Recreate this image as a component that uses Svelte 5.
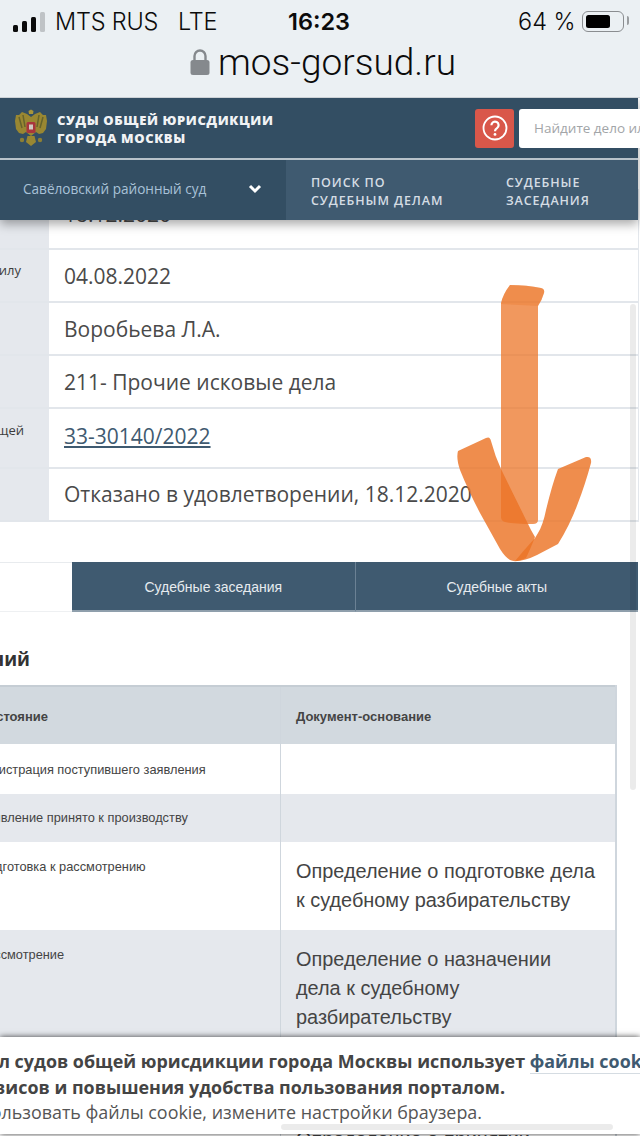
<script lang="ts">
  const details = [
    { label: '', value: '18.12.2020', cls: 'first' },
    { label: 'Дата вступления в законную силу', value: '04.08.2022', cls: '' },
    { label: '', value: 'Воробьева Л.А.', cls: '' },
    { label: '', value: '211- Прочие исковые дела', cls: '' },
    { label: 'Номер дела в вышестоящей', value: '33-30140/2022', cls: 'tall', link: true },
    { label: '', value: 'Отказано в удовлетворении, 18.12.2020', cls: 'last' }
  ];

  const history = [
    { state: 'Регистрация поступившего заявления', doc: [], cls: 'one' },
    { state: 'Заявление принято к производству', doc: [], cls: 'two alt' },
    { state: 'Подготовка к рассмотрению', doc: ['Определение о подготовке дела', 'к судебному разбирательству'], cls: 'three' },
    { state: 'Рассмотрение', doc: ['Определение о назначении', 'дела к судебному', 'разбирательству'], cls: 'four alt' },
    { state: '', doc: ['Определение о принятии'], cls: '' }
  ];
</script>

<div class="screen">
  <div class="browser">
    <div class="status">
      <div class="signal">
        <i class="b1"></i><i class="b2"></i><i class="b3"></i><i class="b4"></i>
      </div>
      <span class="carrier">MTS RUS</span>
      <span class="net">LTE</span>
      <span class="time">16:23</span>
      <span class="percent">64 %</span>
      <div class="battery"><i></i></div>
    </div>
    <div class="address">
      <svg class="lock" width="20" height="28" viewBox="0 0 20 28">
        <path d="M4.5 13V8a5.5 5.5 0 0 1 11 0v5" fill="none" stroke="#85898d" stroke-width="2.4" />
        <rect x="0.5" y="12" width="19" height="15" rx="2.5" fill="#85898d" />
      </svg>
      <span>mos-gorsud.ru</span>
    </div>
  </div>

  <header class="site-header">
    <div class="brand-row">
      <svg class="emblem" width="34" height="38" viewBox="0 0 34 38">
        <path d="M17 8 13 5 8 3 5 6 2 6 1 12 2 20 5 24 9 25 12 23 17 27 22 23 25 25 29 24 32 20 33 12 32 6 29 6 26 3 21 5Z" fill="#998732" />
        <path d="M5 8 8 19M9 6 11 18M29 8 26 19M25 6 23 18" stroke="#66632c" stroke-width="1.5" fill="none" />
        <path d="M14.5 2 17 .5 19.5 2 19 5 15 5Z" fill="#a8953a" />
        <rect x="12.5" y="13" width="9" height="11" rx="1.5" fill="#a9363c" />
        <rect x="15" y="15.5" width="4" height="5" fill="#cfcbc0" />
        <path d="M13.5 27 20.5 27 22 33 17 37 12 33Z" fill="#998732" />
        <circle cx="8" cy="31" r="2.2" fill="#8d7f34" />
        <circle cx="26" cy="31" r="2.2" fill="#8d7f34" />
      </svg>
      <div class="brand">СУДЫ ОБЩЕЙ ЮРИСДИКЦИИ<br />ГОРОДА МОСКВЫ</div>
      <div class="help">
        <svg width="26" height="26" viewBox="0 0 26 26">
          <circle cx="13" cy="13" r="11.5" fill="none" stroke="#fff" stroke-width="1.8" />
          <path d="M9.4 10.2a3.6 3.6 0 1 1 5.6 3c-1.3.9-2 1.5-2 3" fill="none" stroke="#fff" stroke-width="2.2" />
          <circle cx="13" cy="19.4" r="1.4" fill="#fff" />
        </svg>
      </div>
      <div class="search">Найдите дело или документ</div>
    </div>
    <nav class="nav">
      <div class="court">
        <span>Савёловский районный суд</span>
        <svg width="14" height="10" viewBox="0 0 14 10">
          <path d="M2 2 7 7 12 2" fill="none" stroke="#fff" stroke-width="3" />
        </svg>
      </div>
      <div class="nav-item">ПОИСК ПО<br />СУДЕБНЫМ ДЕЛАМ</div>
      <div class="nav-item">СУДЕБНЫЕ<br />ЗАСЕДАНИЯ</div>
    </nav>
  </header>

  <main class="page">
    <section class="details">
      {#each details as row}
        <div class="row {row.cls}">
          <div class="label"><span>{row.label}</span></div>
          <div class="value">
            {#if row.link}<a href="#case">{row.value}</a>{:else}{row.value}{/if}
          </div>
        </div>
      {/each}
    </section>

    <div class="tabs">
      <div class="tab active"></div>
      <div class="tab">Судебные заседания</div>
      <div class="tab">Судебные акты</div>
    </div>

    <h2 class="title"><span>История состояний</span></h2>

    <div class="table">
      <div class="tr head">
        <div class="td state">Состояние</div>
        <div class="td doc">Документ-основание</div>
      </div>
      {#each history as item}
        <div class="tr {item.cls}">
          <div class="td state">{item.state}</div>
          <div class="td doc">
            {#each item.doc as line}<div>{line}</div>{/each}
          </div>
        </div>
      {/each}
    </div>
  </main>

  <div class="vscroll"></div>

  <svg class="arrow" width="150" height="290" viewBox="450 280 150 290">
    <path class="shaft" d="M510 285Q527 285 541 288Q545 289 544 293Q542 300 538 306L538 520Q538 524 533 524Q515 524 505 522Q501 521 501 517L501 303Q503 294 510 285Z" />
    <path class="band" d="M510 285Q527 285 541 288Q545 289 544 293Q542 300 538 306L501 304Q503 294 510 285Z" />
    <path class="arm" d="M458 451 486 438Q490 436 491 441Q495 456 501 469L531 530L535 537Q530 550 526 558Q516 563 510 560Q505 557 500 549L480 513Q468 490 460 470Q456 458 458 451Z" />
    <path class="arm" d="M558 469 586 457Q592 456 591 463Q585 485 578 503Q570 525 558 544L537 555Q525 561 515 561Q524 550 535 538L538 533Q543 525 546 510Q552 485 558 469Z" />
  </svg>

  <aside class="cookie">
    <p class="line-a">Портал судов общей юрисдикции города Москвы использует <a href="#cookie">файлы cookie</a></p>
    <p class="line-b"><span>для работы сервисов и повышения удобства пользования порталом.</span></p>
    <p class="line-c"><span>Если вы не хотите использовать файлы cookie, измените настройки браузера.</span></p>
    <div class="hscroll"></div>
  </aside>
</div>

<style>
  :global(body) {
    margin: 0;
    background: #fff;
  }

  .screen {
    position: relative;
    width: 640px;
    height: 1136px;
    overflow: hidden;
    background: #fff;
    font-family: "Liberation Sans", Arial, sans-serif;
  }

  /* browser chrome */
  .browser {
    position: relative;
    z-index: 3;
    height: 97px;
    background: #ebf0f3;
    border-bottom: 1px solid #cdd2d6;
    font-family: Inter, Roboto, sans-serif;
    color: #0b0b0b;
  }

  .status {
    display: flex;
    align-items: center;
    height: 42px;
    padding-left: 13px;
    font-size: 23.5px;
    font-weight: 300;
  }

  .signal {
    display: flex;
    align-items: flex-end;
    gap: 4px;
    width: 42px;
    height: 20px;
    margin-top: 1px;
  }

  .signal i {
    display: block;
    width: 5px;
    border-radius: 1.5px;
    background: #0b0b0b;
  }

  .signal .b1 { height: 7px; }
  .signal .b2 { height: 11px; }
  .signal .b3 { height: 15px; }
  .signal .b4 { height: 20px; background: #bfc3c6; }

  .carrier { width: 123px; letter-spacing: -0.2px; }
  .net { width: 110px; letter-spacing: -0.2px; }

  .time {
    width: 230px;
    font-weight: 600;
  }

  .percent { width: 64px; }

  .battery {
    position: relative;
    box-sizing: border-box;
    width: 42px;
    height: 21px;
    padding: 3px;
    border: 1.5px solid #8a8d90;
    border-radius: 6px;
  }

  .battery i {
    display: block;
    width: 24px;
    height: 100%;
    border-radius: 2.5px;
    background: #000;
  }

  .battery::after {
    content: "";
    position: absolute;
    top: 4px;
    right: -6px;
    width: 2px;
    height: 9px;
    border-radius: 0 2px 2px 0;
    background: #9a9da0;
  }

  .address {
    display: flex;
    align-items: center;
    justify-content: center;
    gap: 8px;
    height: 40px;
    padding-left: 6px;
    font-family: Roboto, sans-serif;
    font-size: 37px;
    font-weight: 300;
  }

  /* site header */
  .site-header {
    position: relative;
    z-index: 2;
    width: 638px;
    box-shadow: 0 4px 10px rgba(0, 0, 0, 0.35);
    font-family: "Open Sans", sans-serif;
  }

  .brand-row {
    display: flex;
    align-items: center;
    height: 60px;
    padding-left: 14px;
    border-bottom: 2px solid #b8c2ca;
    background: #334e63;
  }

  .emblem {
    flex: none;
    margin-right: 9px;
  }

  .brand {
    flex: none;
    width: 418px;
    padding-top: 1px;
    font-size: 13px;
    font-weight: 800;
    line-height: 18px;
    letter-spacing: 0.6px;
    color: #f1f3f5;
  }

  .help {
    display: flex;
    flex: none;
    align-items: center;
    justify-content: center;
    width: 39px;
    height: 39px;
    margin-right: 5px;
    border-radius: 3px;
    background: #d9574a;
  }

  .search {
    flex: none;
    box-sizing: border-box;
    width: 220px;
    height: 39px;
    padding-left: 15px;
    border-radius: 3px;
    background: #fff;
    font-size: 13.5px;
    line-height: 39px;
    white-space: nowrap;
    color: #a2a5a8;
  }

  .nav {
    display: flex;
    height: 60px;
    background: #3f5a70;
  }

  .court {
    display: flex;
    flex: none;
    align-items: center;
    justify-content: space-between;
    box-sizing: border-box;
    width: 286px;
    padding: 0 24px 3px 23px;
    background: #334e63;
    font-size: 13.6px;
    color: #a9c2d8;
  }

  .nav-item {
    display: flex;
    flex: none;
    align-items: center;
    box-sizing: border-box;
    width: 195px;
    padding: 3px 0 0 25px;
    font-size: 12.5px;
    font-weight: 600;
    line-height: 18px;
    letter-spacing: 0.9px;
    color: #d5dde4;
  }

  .nav-item + .nav-item {
    width: 157px;
  }

  /* page, scrolled sideways and under the header */
  .page {
    margin-top: -31px;
  }

  .details {
    width: 638px;
    border-right: 1px solid #e3e7ec;
    font-family: "Open Sans", sans-serif;
  }

  .row {
    display: flex;
    height: 51px;
    border-bottom: 2px solid #e2e6eb;
  }

  .row.first { height: 59px; }
  .row.tall { height: 58px; }

  .label {
    display: flex;
    flex: none;
    justify-content: flex-end;
    box-sizing: border-box;
    width: 49px;
    padding: 11px 28px 0 0;
    overflow: hidden;
    background: #e5e8ed;
    font-size: 13px;
    white-space: nowrap;
    color: #3c3c3c;
  }

  .row.tall .label { padding: 12px 25px 0 0; }
  .label span { flex: none; }

  .value {
    flex: 1;
    padding: 13px 0 0 15px;
    font-size: 21px;
    line-height: 27px;
    white-space: nowrap;
    color: #4a4a4a;
  }

  .row.first .value { padding-top: 12px; }
  .row.tall .value { padding-top: 14px; }
  .row.last .value { padding-top: 12px; }

  .value a {
    color: #3f5a70;
    text-decoration: underline;
    text-underline-offset: 2px;
  }

  .tabs {
    display: flex;
    width: 638px;
    height: 50px;
    margin-top: 40px;
  }

  .tab {
    flex: 1;
    box-sizing: border-box;
    border-bottom: 2px solid #8f9fac;
    background: #3f5a70;
    font-size: 14px;
    line-height: 51px;
    text-align: center;
    color: #e6ebef;
  }

  .tab + .tab + .tab {
    border-left: 1px solid #6b8194;
  }

  .tab.active {
    flex: none;
    width: 72px;
    border-top: 1px solid #e8ebee;
    border-bottom: 1px solid #eef0f2;
    background: #fff;
  }

  .title {
    display: flex;
    justify-content: flex-end;
    width: 30px;
    height: 73px;
    margin: 0;
    overflow: hidden;
    font-size: 21px;
    font-weight: 700;
    line-height: 93px;
    white-space: nowrap;
    color: #333;
  }

  .title span { flex: none; }

  .table {
    box-sizing: border-box;
    width: 653px;
    margin-left: -36px;
    border-right: 2px solid #cfd6dd;
  }

  .tr {
    display: flex;
    min-height: 48px;
  }

  .tr.head {
    box-sizing: border-box;
    height: 59px;
    border-top: 2px solid #c5cdd4;
    background: #d2d9df;
  }

  .tr.head .td {
    display: flex;
    align-items: center;
    padding-top: 3px;
    padding-bottom: 0;
    font-size: 13px;
    font-weight: 700;
    line-height: 20px;
    color: #444;
  }

  .tr.alt { background: #e5e8ed; }
  .tr.one { height: 50px; }
  .tr.two { height: 48px; }
  .tr.three { height: 88px; }
  .tr.four { height: 180px; }

  .td {
    box-sizing: border-box;
    padding: 15px;
    font-size: 12.8px;
    white-space: nowrap;
    color: #444;
  }

  .td.state {
    flex: none;
    width: 317px;
    border-right: 1px solid #cfd6dd;
    line-height: 20px;
  }

  .tr.one .td.state { padding-top: 16px; }
  .tr.two .td.state { padding-top: 14px; }

  .td.doc {
    flex: 1;
    padding-top: 15px;
    font-size: 19.9px;
    line-height: 29px;
  }

  /* overlays */
  .vscroll {
    position: absolute;
    top: 304px;
    left: 630px;
    width: 6px;
    height: 486px;
    border-radius: 3px;
    background: rgba(0, 0, 0, 0.08);
  }

  .arrow {
    position: absolute;
    top: 280px;
    left: 450px;
    filter: blur(0.7px);
  }

  .arrow path {
    fill: #ec7426;
  }

  .arrow .shaft { fill-opacity: 0.74; }
  .arrow .band { fill-opacity: 0.3; }
  .arrow .arm { fill-opacity: 0.82; }

  .cookie {
    position: absolute;
    top: 1037px;
    left: 0;
    box-sizing: border-box;
    width: 640px;
    height: 97px;
    padding-top: 12px;
    background: #fff;
    box-shadow: 0 0 6px rgba(0, 0, 0, 0.75);
    font-family: "Open Sans", sans-serif;
    font-size: 17.9px;
    line-height: 25.5px;
    white-space: nowrap;
    color: #555;
  }

  .cookie p {
    display: flex;
    margin: 0;
    overflow: hidden;
  }

  .cookie span { flex: none; }

  .cookie .line-a {
    display: block;
    width: 640px;
    font-weight: 700;
    text-indent: -58px;
    color: #444;
  }

  .line-b {
    justify-content: flex-end;
    width: 505px;
    font-weight: 700;
    color: #444;
  }

  .line-c {
    justify-content: flex-end;
    width: 482px;
  }

  .cookie a {
    border-bottom: 1px solid #d5dce2;
    text-decoration: none;
    color: #3f5a70;
  }

  .hscroll {
    position: absolute;
    top: 87px;
    left: 281px;
    width: 332px;
    height: 6px;
    border-radius: 3px;
    background: rgba(0, 0, 0, 0.08);
  }
</style>
